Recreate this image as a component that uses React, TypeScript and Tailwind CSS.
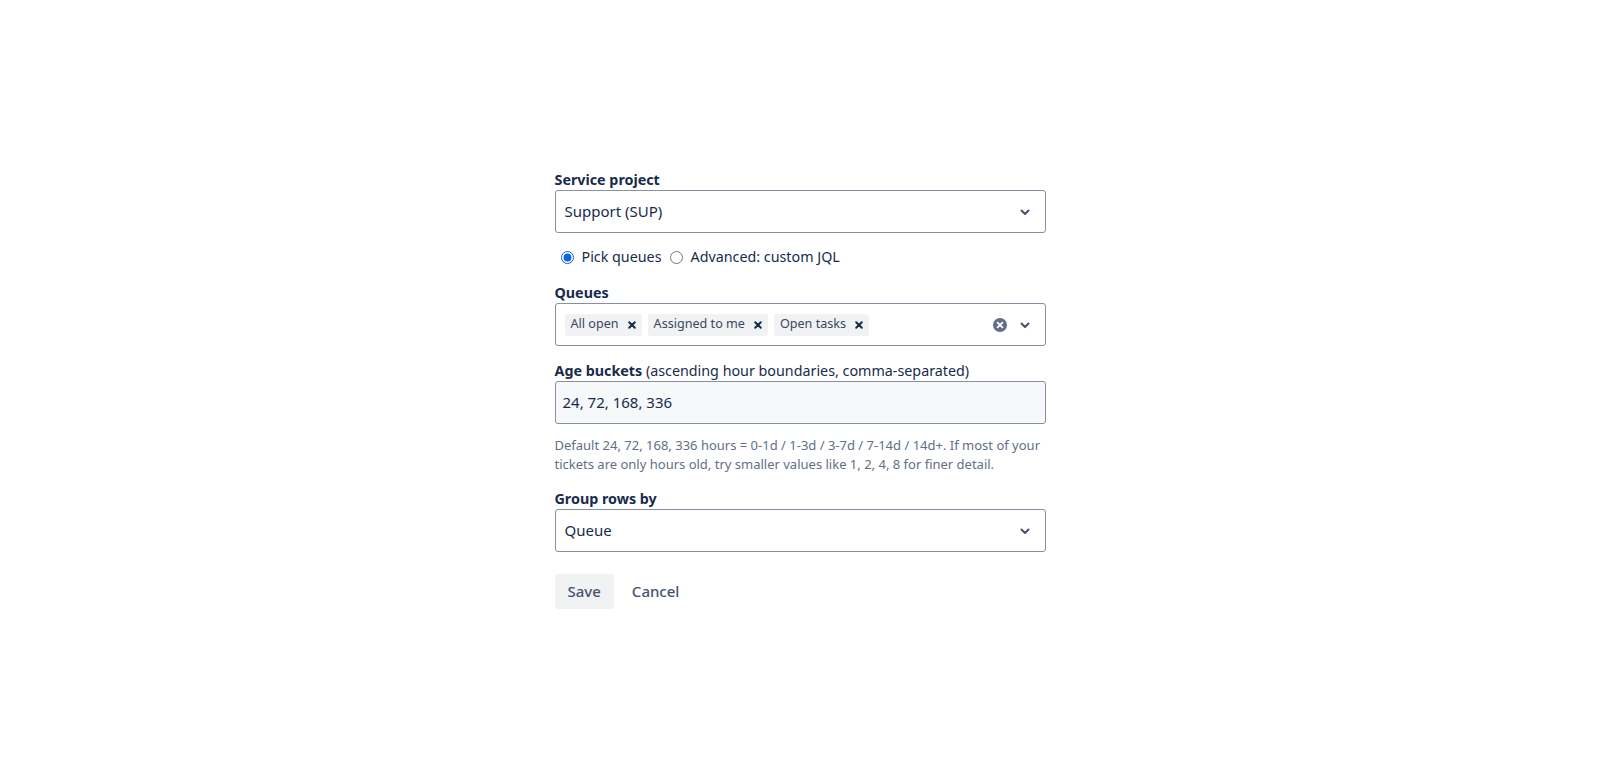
import { useState } from 'react';

const font = { fontFamily: '"Noto Sans", "Open Sans", Arial, sans-serif' };

function Chevron() {
    return (
        <svg width="12" height="12" viewBox="0 0 12 12" className="text-[#44546F]">
            <path d="M2.5 4.5 6 8l3.5-3.5" fill="none" stroke="currentColor" strokeWidth="2" strokeLinecap="round" strokeLinejoin="round" />
        </svg>
    );
}

function SelectBox({ value }: { value: string }) {
    return (
        <div className="flex items-center justify-between h-[43px] w-full rounded-[3px] border border-[#8590A2] bg-white pl-[9px] pr-[14px]">
            <span className="text-[15px] text-[#172B4D]">{value}</span>
            <Chevron />
        </div>
    );
}

function Chip({ label }: { label: string }) {
    return (
        <span className="flex items-center h-[22px] rounded-[3px] bg-[#F1F2F4] pl-[6px] pr-[5px] text-[12.6px] text-[#3B4661]">
            {label}
            <svg width="10" height="10" viewBox="0 0 10 10" className="ml-[8px] text-[#172B4D]">
                <path d="M2.2 2.2l5.6 5.6M7.8 2.2 2.2 7.8" stroke="currentColor" strokeWidth="2" strokeLinecap="round" />
            </svg>
        </span>
    );
}

export default function App() {
    const [mode, setMode] = useState('queues');

    return (
        <div className="min-h-[783px] w-full bg-white" style={font}>
            <div className="mx-auto w-[491px] pt-[170px] text-[#172B4D]">
                {/* Service project */}
                <label className="block text-[14.3px] font-bold leading-[20px]">Service project</label>
                <SelectBox value="Support (SUP)" />

                {/* Mode radios */}
                <div className="mt-[13px] flex items-center text-[14.3px] leading-[22px]">
                    <label className="flex items-center">
                        <input
                            type="radio"
                            checked={mode === 'queues'}
                            onChange={() => setMode('queues')}
                            className="ml-[6px] mr-[8px] h-[13px] w-[13px] accent-[#0C66E4]"
                        />
                        Pick queues
                    </label>
                    <label className="ml-[8px] flex items-center">
                        <input
                            type="radio"
                            checked={mode === 'jql'}
                            onChange={() => setMode('jql')}
                            className="mr-[8px] h-[13px] w-[13px] accent-[#0C66E4]"
                        />
                        Advanced: custom JQL
                    </label>
                </div>

                {/* Queues */}
                <label className="mt-[15px] block text-[14.3px] font-bold leading-[20px]">Queues</label>
                <div className="flex items-center justify-between h-[43px] w-full rounded-[3px] border border-[#8590A2] bg-white pl-[9px] pr-[14px]">
                    <div className="flex items-center gap-[6px]">
                        <Chip label="All open" />
                        <Chip label="Assigned to me" />
                        <Chip label="Open tasks" />
                    </div>
                    <div className="flex items-center gap-[12px]">
                        <svg width="14" height="14" viewBox="0 0 14 14">
                            <circle cx="7" cy="7" r="7" fill="#626F86" />
                            <path d="M4.6 4.6l4.8 4.8M9.4 4.6l-4.8 4.8" stroke="#fff" strokeWidth="1.8" strokeLinecap="round" />
                        </svg>
                        <Chevron />
                    </div>
                </div>

                {/* Age buckets */}
                <label className="mt-[15px] block text-[14.3px] leading-[20px]">
                    <span className="font-bold">Age buckets</span> (ascending hour boundaries, comma-separated)
                </label>
                <div className="flex items-center h-[43px] w-full rounded-[3px] border border-[#8590A2] bg-[#F7F8F9] px-[7px]">
                    <span className="text-[15px] text-[#172B4D]">24, 72, 168, 336</span>
                </div>
                <p className="mt-[12px] text-[13px] leading-[19px] text-[#626F86]">
                    Default 24, 72, 168, 336 hours = 0-1d / 1-3d / 3-7d / 7-14d / 14d+. If most of your tickets are only hours old, try smaller values like 1, 2, 4, 8 for finer detail.
                </p>

                {/* Group rows by */}
                <label className="mt-[15px] block text-[14.3px] font-bold leading-[20px]">Group rows by</label>
                <SelectBox value="Queue" />

                {/* Actions */}
                <div className="mt-[22px] flex items-center gap-[2px]">
                    <button className="h-[35px] rounded-[3px] bg-[#F1F2F4] px-[13px] text-[15px] font-medium text-[#44546F]">
                        Save
                    </button>
                    <button className="h-[35px] rounded-[3px] px-[16px] text-[15px] font-medium text-[#44546F]">
                        Cancel
                    </button>
                </div>
            </div>
        </div>
    );
}
